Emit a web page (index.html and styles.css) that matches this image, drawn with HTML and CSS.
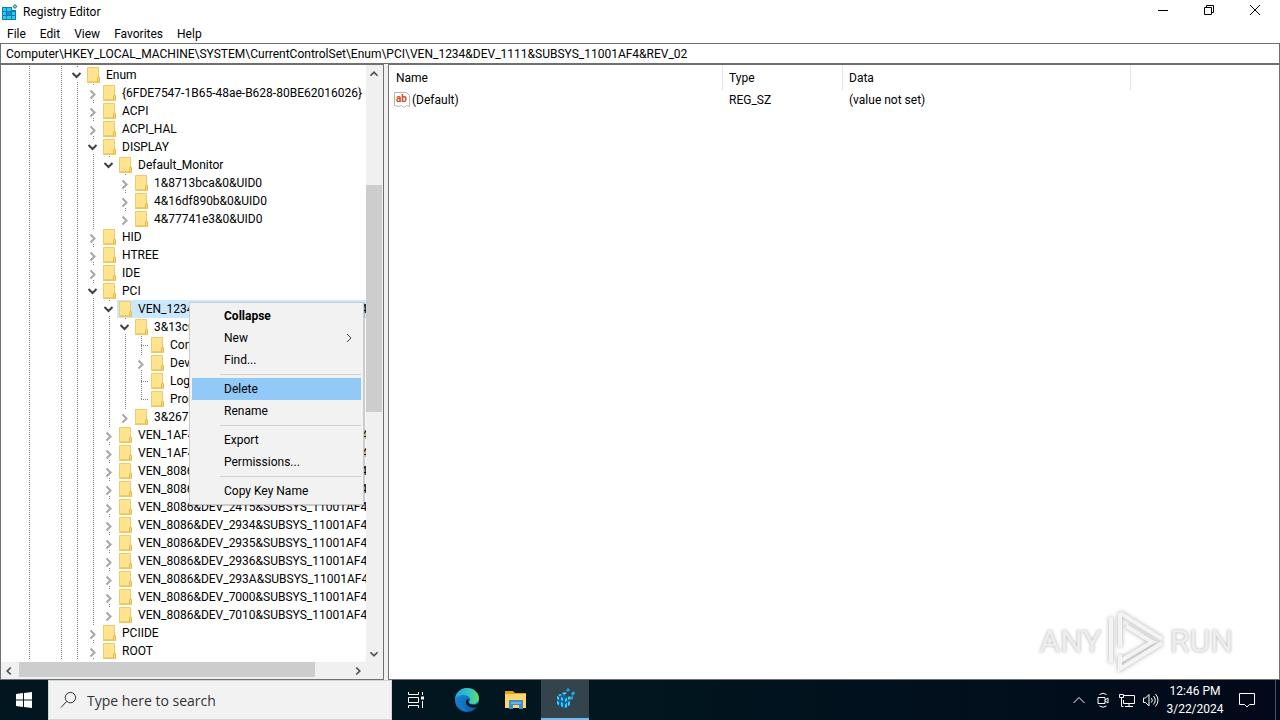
FILE: index.html
```html
<!DOCTYPE html>
<html lang="en">

<head>
    <meta charset="UTF-8">
    <meta name="viewport" content="width=device-width, initial-scale=1.0">
    <title>Registry Editor</title>
    <link rel="stylesheet" href="styles.css">
</head>

<body>
    <!-- Shared icons -->
    <svg class="sprite" aria-hidden="true">
        <symbol id="folder" viewBox="0 0 16 16">
            <path d="M2.500 .5h11v14h-11z" fill="#ffe48f" stroke="#efcb6c"/>
            <path d="M12.500 15.500v-4l1-2 1 1v5z" fill="#ffd968" stroke="#e3b84f"/>
            <path d="M2 15.500h12" stroke="#efc860"/>
        </symbol>
        <symbol id="open" viewBox="0 0 16 16">
            <path d="M3.500 6l4 4 4-4" fill="none" stroke="#404040" stroke-width="2"/>
        </symbol>
        <symbol id="closed" viewBox="0 0 16 16">
            <path d="M5.500 5.500l4 4-4 4" fill="none" stroke="#a6a6a6" stroke-width="2"/>
        </symbol>
        <symbol id="arrow" viewBox="0 0 16 16">
            <path d="M4 10l4-4 4 4" fill="none" stroke="#505050" stroke-width="2"/>
        </symbol>
        <symbol id="regedit" viewBox="0 0 16 16">
            <path d="M0 3h10v3h4v10H0z" fill="#0b7fae"/>
            <path d="M1 4h3v3H1zM5 4h4v3H5zM1 8h3v3H1zM10 8h3v3h-3zM1 12h3v3H1zM5 12h4v3H5zM10 12h3v3h-3z" fill="#2fc8f5"/>
            <path d="M5 8h4v3H5z" fill="#1390cc"/>
            <path d="M13 0l2.500 2.500L13 5l-2.500-2.500z" fill="#3a7f9c"/>
            <path d="M13 1.500l1 1-1 1-1-1z" fill="#c9f2ff"/>
        </symbol>
    </svg>

    <div class="window">
        <header class="titlebar">
            <svg class="app-icon"><use href="#regedit"/></svg>
            <h1>Registry Editor</h1>
            <div class="window-buttons">
                <button type="button" aria-label="Minimize"><svg viewBox="0 0 12 12"><path d="M1 6.500h10"/></svg></button>
                <button type="button" aria-label="Restore"><svg viewBox="0 0 12 12"><path d="M1.500 3.500h7v7h-7zM3.500 3.500v-2h7v7h-2"/></svg></button>
                <button type="button" aria-label="Close"><svg viewBox="0 0 12 12"><path d="M1 1l10 10M11 1L1 11"/></svg></button>
            </div>
        </header>

        <nav class="menubar">
            <button type="button">File</button>
            <button type="button">Edit</button>
            <button type="button">View</button>
            <button type="button">Favorites</button>
            <button type="button">Help</button>
        </nav>

        <input class="address" type="text" aria-label="Key path" value="Computer\HKEY_LOCAL_MACHINE\SYSTEM\CurrentControlSet\Enum\PCI\VEN_1234&amp;DEV_1111&amp;SUBSYS_11001AF4&amp;REV_02">

        <main class="panes">
            <section class="tree-pane">
                <div class="tree-view">
                    <!-- The first three levels are scrolled out of view -->
                    <ul class="tree"><li><ul><li class="last"><ul><li><ul>
                        <li>
                            <div class="row"><button type="button" aria-label="Collapse"><svg><use href="#open"/></svg></button><svg><use href="#folder"/></svg><span>Enum</span></div>
                            <ul>
                                <li><div class="row"><button type="button" aria-label="Expand"><svg><use href="#closed"/></svg></button><svg><use href="#folder"/></svg><span>{6FDE7547-1B65-48ae-B628-80BE62016026}</span></div></li>
                                <li><div class="row"><button type="button" aria-label="Expand"><svg><use href="#closed"/></svg></button><svg><use href="#folder"/></svg><span>ACPI</span></div></li>
                                <li><div class="row"><button type="button" aria-label="Expand"><svg><use href="#closed"/></svg></button><svg><use href="#folder"/></svg><span>ACPI_HAL</span></div></li>
                                <li>
                                    <div class="row"><button type="button" aria-label="Collapse"><svg><use href="#open"/></svg></button><svg><use href="#folder"/></svg><span>DISPLAY</span></div>
                                    <ul>
                                        <li class="last">
                                            <div class="row"><button type="button" aria-label="Collapse"><svg><use href="#open"/></svg></button><svg><use href="#folder"/></svg><span>Default_Monitor</span></div>
                                            <ul>
                                                <li><div class="row"><button type="button" aria-label="Expand"><svg><use href="#closed"/></svg></button><svg><use href="#folder"/></svg><span>1&amp;8713bca&amp;0&amp;UID0</span></div></li>
                                                <li><div class="row"><button type="button" aria-label="Expand"><svg><use href="#closed"/></svg></button><svg><use href="#folder"/></svg><span>4&amp;16df890b&amp;0&amp;UID0</span></div></li>
                                                <li class="last"><div class="row"><button type="button" aria-label="Expand"><svg><use href="#closed"/></svg></button><svg><use href="#folder"/></svg><span>4&amp;77741e3&amp;0&amp;UID0</span></div></li>
                                            </ul>
                                        </li>
                                    </ul>
                                </li>
                                <li><div class="row"><button type="button" aria-label="Expand"><svg><use href="#closed"/></svg></button><svg><use href="#folder"/></svg><span>HID</span></div></li>
                                <li><div class="row"><button type="button" aria-label="Expand"><svg><use href="#closed"/></svg></button><svg><use href="#folder"/></svg><span>HTREE</span></div></li>
                                <li><div class="row"><button type="button" aria-label="Expand"><svg><use href="#closed"/></svg></button><svg><use href="#folder"/></svg><span>IDE</span></div></li>
                                <li>
                                    <div class="row"><button type="button" aria-label="Collapse"><svg><use href="#open"/></svg></button><svg><use href="#folder"/></svg><span>PCI</span></div>
                                    <ul>
                                        <li>
                                            <div class="row selected"><button type="button" aria-label="Collapse"><svg><use href="#open"/></svg></button><svg><use href="#folder"/></svg><span>VEN_1234&amp;DEV_1111&amp;SUBSYS_11001AF4&amp;REV_02</span></div>
                                            <ul>
                                                <li>
                                                    <div class="row"><button type="button" aria-label="Collapse"><svg><use href="#open"/></svg></button><svg><use href="#folder"/></svg><span>3&amp;13c0b0c5&amp;0&amp;10</span></div>
                                                    <ul>
                                                        <li><div class="row"><i class="branch"></i><svg><use href="#folder"/></svg><span>Control</span></div></li>
                                                        <li><div class="row"><button type="button" aria-label="Expand"><svg><use href="#closed"/></svg></button><svg><use href="#folder"/></svg><span>Device Parameters</span></div></li>
                                                        <li><div class="row"><i class="branch"></i><svg><use href="#folder"/></svg><span>LogConf</span></div></li>
                                                        <li class="last"><div class="row"><i class="branch"></i><svg><use href="#folder"/></svg><span>Properties</span></div></li>
                                                    </ul>
                                                </li>
                                                <li class="last"><div class="row"><button type="button" aria-label="Expand"><svg><use href="#closed"/></svg></button><svg><use href="#folder"/></svg><span>3&amp;267a616a&amp;0&amp;10</span></div></li>
                                            </ul>
                                        </li>
                                        <li><div class="row"><button type="button" aria-label="Expand"><svg><use href="#closed"/></svg></button><svg><use href="#folder"/></svg><span>VEN_1AF4&amp;DEV_1000&amp;SUBSYS_00011AF4&amp;REV_00</span></div></li>
                                        <li><div class="row"><button type="button" aria-label="Expand"><svg><use href="#closed"/></svg></button><svg><use href="#folder"/></svg><span>VEN_1AF4&amp;DEV_1003&amp;SUBSYS_00031AF4&amp;REV_00</span></div></li>
                                        <li><div class="row"><button type="button" aria-label="Expand"><svg><use href="#closed"/></svg></button><svg><use href="#folder"/></svg><span>VEN_8086&amp;DEV_1237&amp;SUBSYS_11001AF4&amp;REV_02</span></div></li>
                                        <li><div class="row"><button type="button" aria-label="Expand"><svg><use href="#closed"/></svg></button><svg><use href="#folder"/></svg><span>VEN_8086&amp;DEV_1237&amp;SUBSYS_11001AF4&amp;REV_03</span></div></li>
                                        <li><div class="row"><button type="button" aria-label="Expand"><svg><use href="#closed"/></svg></button><svg><use href="#folder"/></svg><span>VEN_8086&amp;DEV_2415&amp;SUBSYS_11001AF4&amp;REV_01</span></div></li>
                                        <li><div class="row"><button type="button" aria-label="Expand"><svg><use href="#closed"/></svg></button><svg><use href="#folder"/></svg><span>VEN_8086&amp;DEV_2934&amp;SUBSYS_11001AF4&amp;REV_03</span></div></li>
                                        <li><div class="row"><button type="button" aria-label="Expand"><svg><use href="#closed"/></svg></button><svg><use href="#folder"/></svg><span>VEN_8086&amp;DEV_2935&amp;SUBSYS_11001AF4&amp;REV_03</span></div></li>
                                        <li><div class="row"><button type="button" aria-label="Expand"><svg><use href="#closed"/></svg></button><svg><use href="#folder"/></svg><span>VEN_8086&amp;DEV_2936&amp;SUBSYS_11001AF4&amp;REV_03</span></div></li>
                                        <li><div class="row"><button type="button" aria-label="Expand"><svg><use href="#closed"/></svg></button><svg><use href="#folder"/></svg><span>VEN_8086&amp;DEV_293A&amp;SUBSYS_11001AF4&amp;REV_03</span></div></li>
                                        <li><div class="row"><button type="button" aria-label="Expand"><svg><use href="#closed"/></svg></button><svg><use href="#folder"/></svg><span>VEN_8086&amp;DEV_7000&amp;SUBSYS_11001AF4&amp;REV_00</span></div></li>
                                        <li class="last"><div class="row"><button type="button" aria-label="Expand"><svg><use href="#closed"/></svg></button><svg><use href="#folder"/></svg><span>VEN_8086&amp;DEV_7010&amp;SUBSYS_11001AF4&amp;REV_00</span></div></li>
                                    </ul>
                                </li>
                                <li><div class="row"><button type="button" aria-label="Expand"><svg><use href="#closed"/></svg></button><svg><use href="#folder"/></svg><span>PCIIDE</span></div></li>
                                <li><div class="row"><button type="button" aria-label="Expand"><svg><use href="#closed"/></svg></button><svg><use href="#folder"/></svg><span>ROOT</span></div></li>
                            </ul>
                        </li>
                    </ul></li></ul></li></ul></li></ul>
                </div>

                <div class="scrollbar vertical">
                    <button type="button" aria-label="Scroll up"><svg><use href="#arrow"/></svg></button>
                    <div class="track"><div class="thumb"></div></div>
                    <button type="button" class="down" aria-label="Scroll down"><svg><use href="#arrow"/></svg></button>
                </div>
                <div class="scrollbar horizontal">
                    <button type="button" class="left" aria-label="Scroll left"><svg><use href="#arrow"/></svg></button>
                    <div class="track"><div class="thumb"></div></div>
                    <button type="button" class="right" aria-label="Scroll right"><svg><use href="#arrow"/></svg></button>
                </div>

                <!-- Context menu of the selected key -->
                <div class="context-menu" role="menu">
                    <button type="button" role="menuitem" class="default">Collapse</button>
                    <button type="button" role="menuitem">New <svg viewBox="0 0 8 10"><path d="M2 1l4 4-4 4" fill="none" stroke="#404040"/></svg></button>
                    <button type="button" role="menuitem">Find...</button>
                    <hr>
                    <button type="button" role="menuitem" class="active">Delete</button>
                    <button type="button" role="menuitem">Rename</button>
                    <hr>
                    <button type="button" role="menuitem">Export</button>
                    <button type="button" role="menuitem">Permissions...</button>
                    <hr>
                    <button type="button" role="menuitem">Copy Key Name</button>
                </div>
            </section>

            <section class="value-pane">
                <table>
                    <thead>
                        <tr><th class="col-name">Name</th><th class="col-type">Type</th><th class="col-data">Data</th><th class="col-rest"></th></tr>
                    </thead>
                    <tbody>
                        <tr>
                            <td class="value-name">
                                <svg viewBox="0 0 16 16">
                                    <path d="M.5.500h12l3 3v11l-3-1-2 2-3-2-3 1-4-1z" fill="#fff" stroke="#b5b5b5"/>
                                    <text x="2" y="10">ab</text>
                                </svg>(Default)
                            </td>
                            <td>REG_SZ</td>
                            <td>(value not set)</td>
                            <td></td>
                        </tr>
                    </tbody>
                </table>
                <div class="watermark">
                    <span>ANY</span>
                    <svg viewBox="0 0 60 64">
                        <path d="M5 8v46M14 4v34M14 4l42 26M20 17l26 16L14 52M56 34L14 60V46" />
                    </svg>
                    <span>RUN</span>
                </div>
            </section>
        </main>
    </div>

    <footer class="taskbar">
        <button type="button" class="start" aria-label="Start">
            <svg viewBox="0 0 16 16"><path d="M0 2l7-1v6.500H0zM8 1l8-1v7.500H8zM0 8.500h7V15l-7-1zM8 8.500h8V16l-8-1z" fill="#fff"/></svg>
        </button>
        <label class="search">
            <svg viewBox="0 0 18 18"><circle cx="11" cy="6.500" r="5.500"/><path d="M7 10.500L1 17"/></svg>
            <input type="text" placeholder="Type here to search" aria-label="Search">
        </label>
        <button type="button" class="task-view" aria-label="Task View">
            <svg class="outline" viewBox="0 0 20 20"><path d="M2.500 2v2.500h10V2M2.500 18v-2.500h10V18M2.500 7.500h10v5h-10zM16.500 2v3M16.500 11v7"/><path d="M15 6.500h3v3h-3z" fill="#fff" stroke="none"/></svg>
        </button>
        <div class="apps">
            <button type="button" aria-label="Microsoft Edge">
                <svg viewBox="0 0 24 24">
                    <defs>
                        <linearGradient id="edgeTop" x1="0" x2="1"><stop offset="0" stop-color="#249fe0"/><stop offset=".6" stop-color="#32c6c2"/><stop offset="1" stop-color="#62de5c"/></linearGradient>
                        <linearGradient id="edgeLow" x1="0" x2="1" y2="1"><stop offset="0" stop-color="#1b93de"/><stop offset="1" stop-color="#0d4f9f"/></linearGradient>
                    </defs>
                    <circle cx="12" cy="12" r="12" fill="url(#edgeLow)"/>
                    <path d="M0 11C1 4 6 0 12 0c7 0 12 5 12 10 0 4-3 6-6 6-3 0-5-1-4-2 3-3 0-7-5-7-4 0-8 2-9 4z" fill="url(#edgeTop)"/>
                    <path d="M9 9c-4 4-2 11 4 14C6 24 2 17 4 12c1-2 3-3 5-3z" fill="#1677c5"/>
                    <path d="M14 11c-2 3 1 6 5 6 2 0 3-1 5-2l-2 4c-5 2-11-1-11-5 0-2 1-3 3-3z" fill="#01161f"/>
                </svg>
            </button>
            <button type="button" aria-label="File Explorer">
                <svg viewBox="0 0 24 24">
                    <path d="M1 3h8l2 2h11v3H1z" fill="#e0a31a"/>
                    <path d="M1 6h21v14H1z" fill="#ffd667"/>
                    <path d="M5 12h14v9h-4v-4H9v4H5z" fill="#3b8ed0"/>
                    <path d="M7 14h10v2H7z" fill="#68b5e8"/>
                </svg>
            </button>
            <button type="button" class="running" aria-label="Registry Editor">
                <svg viewBox="0 0 24 24">
                    <path d="M4 9l6-2 6 3v9l-5 3-7-4z" fill="#0c6592"/>
                    <path d="M4 9l2 1v3l-2-1zM8 10l2 1v3l-2-1zM4 14l2 1v3l-2-1zM8 15l2 1v4l-2-1zM12 12l2-1v3l-2 1zM15 10l2-1v3l-2 1zM12 17l2-1v4l-2 1zM15 15l2-1v4l-2 1zM9 6l3-1 2 1-3 2zM5 8l2-1 2 1-2 1z" fill="#48c4f5"/>
                    <path d="M13 3l2-2 2 2-2 2zM18 6l3-2 1 3-3 2zM17 10l3-1v3l-3 1z" fill="#1ba4e4"/>
                </svg>
            </button>
        </div>

        <div class="tray">
            <button type="button" aria-label="Show hidden icons"><svg viewBox="0 0 16 16"><path d="M2.500 11L8 5.500l5.500 5.500"/></svg></button>
            <button type="button" aria-label="Meet Now"><svg viewBox="0 0 16 16"><path d="M3 5.500h7v6H3zM10 8l3-2v5l-3-2M4.500 2.500q3.500-2.500 7 0M4.500 14q3.500 2.500 7 0"/></svg></button>
            <button type="button" aria-label="Network"><svg viewBox="0 0 16 16"><path d="M5 3.500h10.500v8H4.500V8M10 11.500v3M6 14.500h8M.5 2.500h4v3h-4zM2.500 5.500v9h2"/></svg></button>
            <button type="button" aria-label="Volume"><svg viewBox="0 0 16 16"><path d="M.5 6v4.500h2L6 14V2.500L2.500 6zM8.500 6q1.500 2.500 0 4.500M10.500 4q3.500 4 0 8.500M12.500 2q5 6 0 12.500"/></svg></button>
            <button type="button" class="clock"><time>12:46 PM</time><time>3/22/2024</time></button>
            <button type="button" class="notifications" aria-label="Notifications"><svg viewBox="0 0 18 18"><path d="M1.500 2.500h15v11h-5L9 16l-2.500-2.500h-5z"/></svg></button>
            <button type="button" class="show-desktop" aria-label="Show desktop"></button>
        </div>
    </footer>
</body>

</html>
```
FILE: styles.css
```css
* {
    box-sizing: border-box;
    margin: 0;
    padding: 0;
}

body {
    display: flex;
    flex-direction: column;
    height: 100vh;
    overflow: hidden;
    background-color: #fff;
    color: #000;
    font-family: Roboto, "Open Sans", sans-serif;
    font-size: 12px;
}

button,
input {
    border: none;
    background: none;
    color: inherit;
    font: inherit;
}

.sprite {
    display: none;
}

.window {
    display: flex;
    flex-direction: column;
    flex: 1;
    min-height: 0;
}

/* Title bar */
.titlebar {
    display: flex;
    align-items: center;
    height: 24px;
    padding-left: 2px;
}

.titlebar h1 {
    flex: 1;
    margin-left: 5px;
    font-size: 12px;
    font-weight: normal;
}

.app-icon {
    width: 16px;
    height: 16px;
}

.window-buttons {
    display: flex;
    align-self: flex-start;
    padding-right: 2px;
}

.window-buttons button {
    display: flex;
    align-items: center;
    justify-content: center;
    width: 46px;
    height: 20px;
}

.window-buttons svg {
    width: 12px;
    height: 12px;
    fill: none;
    stroke: #000;
}

/* Menu bar */
.menubar {
    display: flex;
    height: 19px;
}

.menubar button {
    padding: 0 7px;
    line-height: 18px;
}

.address {
    width: 100%;
    height: 21px;
    padding: 0 5px;
    border: 1px solid #707070;
    outline: none;
}

/* Panes */
.panes {
    display: flex;
    gap: 4px;
    flex: 1;
    min-height: 0;
    background-color: #f0f0f0;
}

.tree-pane {
    position: relative;
    display: grid;
    grid-template-columns: 1fr 17px;
    grid-template-rows: 1fr 17px;
    width: 30%;
    border: 1px solid #707070;
}

.tree-view {
    overflow: hidden;
    padding-top: 1px;
    background-color: #fff;
}

.tree {
    padding-left: 20px;
}

.tree ul {
    padding-left: 16px;
}

.tree li {
    list-style: none;
    background: repeating-linear-gradient(#808080 0 1px, transparent 1px 2px) 8px 0 / 1px 100% no-repeat;
}

/* The guide line stops at the last child */
.tree li.last {
    background-size: 1px 9px;
}

.tree > li > ul > li.last {
    background: none;
}

.row {
    display: flex;
    align-items: center;
    height: 18px;
    white-space: nowrap;
}

.row svg {
    flex: none;
    display: block;
    width: 16px;
    height: 16px;
}

.row button {
    display: flex;
    align-items: center;
    flex: none;
    width: 16px;
    height: 14px;
    background-color: #fff;
}

.row span {
    flex: 1;
    padding-left: 5px;
}

.row.selected {
    background: linear-gradient(#cce8ff, #cce8ff) 16px 0 no-repeat;
}

.branch {
    align-self: center;
    flex: none;
    width: 8px;
    height: 1px;
    margin-left: 8px;
    background: repeating-linear-gradient(90deg, #808080 0 1px, transparent 1px 2px);
}

/* Scrollbars */
.scrollbar {
    display: flex;
    background-color: #f0f0f0;
}

.scrollbar.vertical {
    flex-direction: column;
    padding-right: 1px;
}

.scrollbar button {
    display: flex;
    align-items: center;
    justify-content: center;
    width: 16px;
    height: 17px;
}

.scrollbar svg {
    width: 14px;
    height: 14px;
}

.down svg {
    transform: rotate(180deg);
}

.left svg {
    transform: rotate(-90deg);
}

.right svg {
    transform: rotate(90deg);
}

.track {
    display: grid;
    flex: 1;
}

.vertical .track {
    grid-template-rows: 103fr 226fr 233fr;
}

.horizontal .track {
    grid-template-columns: 2fr 296fr 35fr;
}

.thumb {
    background-color: #cdcdcd;
}

.vertical .thumb {
    grid-row: 2;
}

.horizontal .thumb {
    grid-column: 2;
    margin-bottom: 2px;
}

/* Context menu */
.context-menu {
    position: absolute;
    top: 237px;
    left: 188px;
    width: 175px;
    padding: 2px;
    border: 1px solid #ccc;
    background-color: #f2f2f2;
    box-shadow: 1px 1px 1px rgba(0, 0, 0, 0.2);
}

.context-menu button {
    display: flex;
    align-items: center;
    justify-content: space-between;
    width: 100%;
    height: 22px;
    padding: 0 8px 0 32px;
}

.context-menu svg {
    width: 8px;
    height: 10px;
}

.context-menu .default {
    font-weight: bold;
}

.context-menu .active {
    background-color: #91c9f7;
}

.context-menu hr {
    height: 1px;
    margin: 3px 0 3px 28px;
    border: none;
    background-color: #d0d0d0;
}

/* Values */
.value-pane {
    display: flex;
    flex-direction: column;
    justify-content: space-between;
    flex: 1;
    border: 1px solid #707070;
    background-color: #fff;
}

table {
    width: 100%;
    table-layout: fixed;
    border-collapse: separate;
    border-spacing: 0;
}

th {
    height: 25px;
    padding-left: 6px;
    border-right: 1px solid #e5e5e5;
    font-weight: normal;
    text-align: left;
}

th:first-child {
    padding-left: 7px;
}

th:last-child {
    border-right: none;
}

.col-name {
    width: 334px;
}

.col-type {
    width: 120px;
}

.col-data {
    width: 288px;
}

td {
    height: 20px;
    padding-left: 6px;
}

.value-name {
    display: flex;
    align-items: center;
    gap: 2px;
    padding-left: 5px;
}

.value-name svg {
    width: 16px;
    height: 16px;
}

.value-name text {
    fill: #d0492c;
    font-size: 10px;
    font-weight: bold;
}

.watermark {
    display: flex;
    align-items: center;
    align-self: flex-end;
    gap: 4px;
    margin: 0 46px 6px 0;
    color: #eee;
    font-size: 32px;
    text-shadow: 0 0 3px #aaa;
}

.watermark svg {
    width: 60px;
    height: 64px;
    fill: none;
    stroke: #f4f4f4;
    stroke-width: 4;
    filter: drop-shadow(0 0 2px #aaa);
}

/* Taskbar */
.taskbar {
    display: flex;
    height: 40px;
    background: linear-gradient(90deg, #01161f, #01161f 50%, #02091a);
    color: #fff;
}

.taskbar button {
    display: flex;
    align-items: center;
    justify-content: center;
}

.taskbar .start,
.taskbar .task-view,
.apps button {
    width: 48px;
}

.start svg {
    width: 16px;
    height: 16px;
}

.search {
    display: flex;
    align-items: center;
    gap: 10px;
    width: 344px;
    padding-left: 11px;
    border: 1px solid #d5d5d5;
    background-color: #f2f2f2;
}

.search svg {
    width: 17px;
    height: 18px;
    fill: none;
    stroke: #222;
}

.search input {
    flex: 1;
    min-width: 0;
    font-family: "Open Sans", sans-serif;
    font-size: 14px;
    outline: none;
}

.search input::placeholder {
    color: #333;
    opacity: 1;
}

.outline {
    width: 20px;
    height: 20px;
    fill: none;
    stroke: #fff;
}

.apps {
    display: flex;
    gap: 1px;
    margin-left: 3px;
}

.apps svg {
    width: 24px;
    height: 24px;
}

.apps .running {
    background-color: #33444c;
    border-bottom: 2px solid #76b9ed;
}

.tray {
    display: flex;
    margin-left: auto;
}

.tray button {
    width: 24px;
}

.tray svg {
    width: 16px;
    height: 16px;
    fill: none;
    stroke: #fff;
}

.tray .clock {
    flex-direction: column;
    width: 64px;
    line-height: 18px;
}

.tray .notifications {
    width: 40px;
}

.notifications svg {
    width: 18px;
    height: 18px;
}

.tray .show-desktop {
    width: 5px;
    margin-left: 8px;
    border-left: 1px solid #4c5260;
}
```
